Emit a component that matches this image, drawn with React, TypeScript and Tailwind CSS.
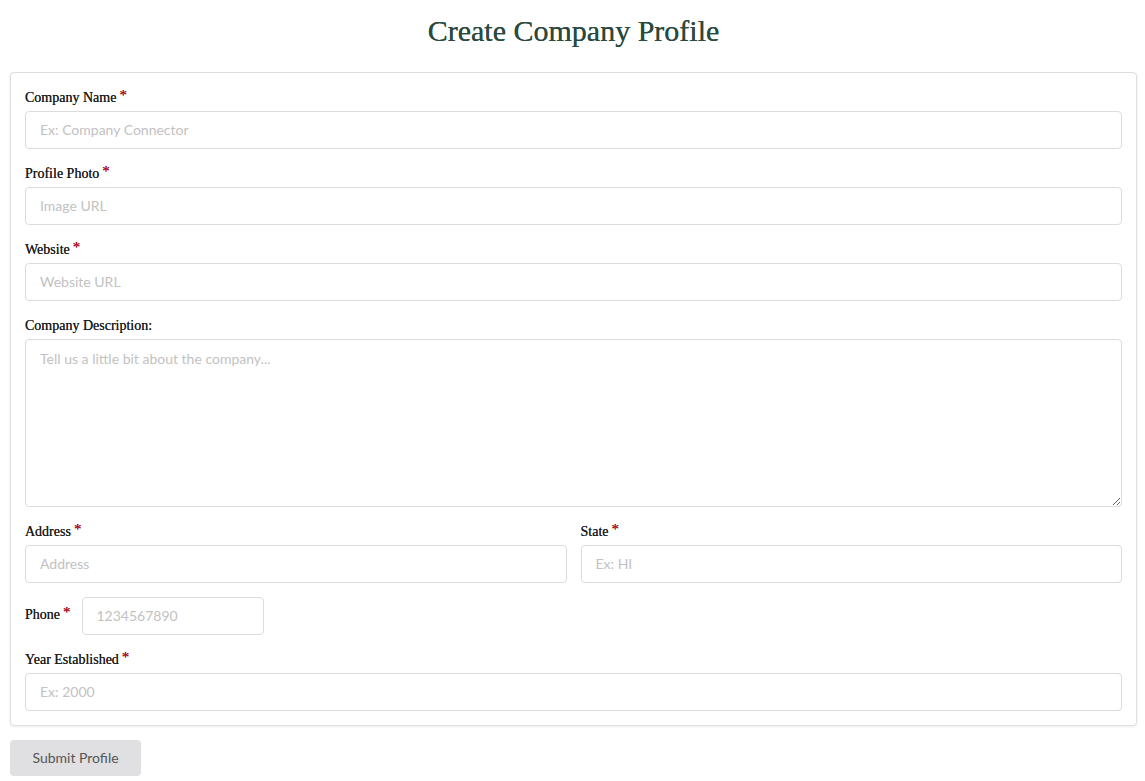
import React from 'react';

const serif = { fontFamily: '"Liberation Serif", "DejaVu Serif", serif' };

function Label({ text, required = true }: { text: string; required?: boolean }) {
  return (
    <label
      className="block h-[24px] leading-[22px] pb-[2px] text-[14px] text-[#1f1f1f] [text-shadow:0_0_0.3px_#1f1f1f]"
      style={serif}
    >
      {text}
      {required && <sup className="ml-[3px] text-[15px] text-[#d0021b] relative top-[-2px]">*</sup>}
    </label>
  );
}

const inputCls =
  'block w-full h-[38px] rounded-[4px] border border-[#dcdcdc] bg-white px-[14px] pb-[2px] text-[14px] text-[#333] placeholder:text-[#c2c2c2] outline-none font-["Lato",sans-serif]';

function Field({ label, placeholder, required = true }: { label: string; placeholder: string; required?: boolean }) {
  return (
    <div>
      <Label text={label} required={required} />
      <input className={inputCls} placeholder={placeholder} />
    </div>
  );
}

export default function App() {
  return (
    <div className="min-h-screen bg-white pl-[10px] pr-[8px] font-['Lato',sans-serif]">
      <h1
        className="pt-[13px] pb-[23px] text-center text-[30px] leading-[36px] text-[#2b4a3f] [text-shadow:0_0_0.6px_#2b4a3f]"
        style={serif}
      >
        Create Company Profile
      </h1>

      <form className="rounded-[4px] border border-[#dedede] bg-white p-[14px] shadow-[0_1px_3px_rgba(0,0,0,0.08)] flex flex-col gap-[14px]">
        <Field label="Company Name" placeholder="Ex: Company Connector" />
        <Field label="Profile Photo" placeholder="Image URL" />
        <Field label="Website" placeholder="Website URL" />
        <div>
          <Label text="Company Description:" required={false} />
          <textarea
            className="block w-full h-[168px] rounded-[4px] border border-[#dcdcdc] bg-white px-[14px] pt-[8px] pb-[9px] text-[14px] text-[#333] placeholder:text-[#c2c2c2] outline-none font-['Lato',sans-serif]"
            placeholder="Tell us a little bit about the company..."
          />
        </div>
        <div className="grid grid-cols-2 gap-[14px]">
          <Field label="Address" placeholder="Address" />
          <Field label="State" placeholder="Ex: HI" />
        </div>
        <div className="flex items-center gap-[11px]">
          <Label text="Phone" />
          <input className={inputCls + ' !w-[182px]'} placeholder="1234567890" />
        </div>
        <Field label="Year Established" placeholder="Ex: 2000" />
      </form>

      <button
        type="button"
        className="mt-[14px] h-[36px] w-[131px] rounded-[4px] bg-[#e0e0e2] pb-[1px] text-[14px] text-[#555] font-['Lato',sans-serif]"
      >
        Submit Profile
      </button>
    </div>
  );
}
